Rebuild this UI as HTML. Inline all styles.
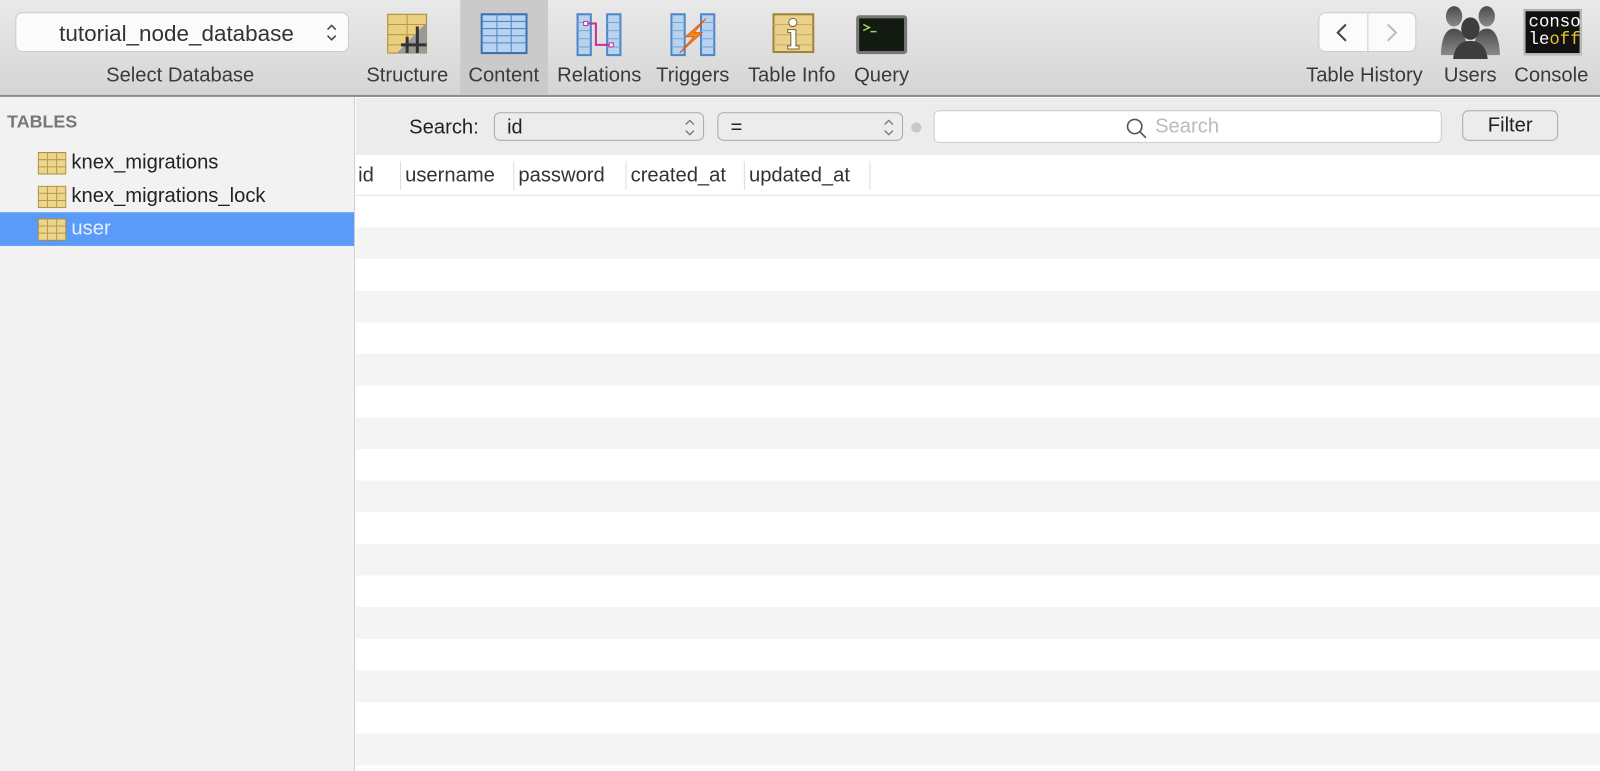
<!DOCTYPE html>
<html><head><meta charset="utf-8"><style>
*{box-sizing:border-box;margin:0;padding:0}
html,body{width:1600px;height:771px;overflow:hidden}
body{font-family:"Liberation Sans",sans-serif;background:#fff;position:relative;color:#333}
#w{position:absolute;left:0;top:0;width:1568px;height:756px;transform:scale(1.0204);transform-origin:0 0}
.tb{position:absolute;left:0;top:0;width:1568px;height:95px;background:linear-gradient(#e9e9e9,#d5d5d5);border-bottom:2px solid #8a8a8a}
.lbl{position:absolute;top:63px;font-size:19.8px;color:#3a3a3a;white-space:nowrap}
.ic{position:absolute;top:12px}
.sel{position:absolute;left:15px;top:12px;width:327px;height:39px;background:#fbfbfb;border:1px solid #ccc;border-radius:7px;font-size:22px;color:#333;padding:7px 0 0 42px}
.side{position:absolute;left:0;top:95px;width:348px;height:676px;background:#f3f2f2;border-right:1px solid #cfcfcf}
.side .h{position:absolute;left:7px;top:14px;font-size:17.5px;font-weight:bold;color:#777}
.it{position:absolute;left:0;width:347px;height:33px;font-size:19.8px;color:#222;padding:5px 0 0 70px}
.it svg{position:absolute;left:37px;top:6px}
.fb{position:absolute;left:349px;top:96px;width:1251px;height:56px;background:#ececec}
.pop{position:absolute;top:14px;height:28px;border:1px solid #aaa;border-radius:6px;background:#ececec;font-size:19.5px;color:#222;padding:3px 0 0 12px}
.pop svg{position:absolute;right:8px;top:5px}
.hd{position:absolute;left:349px;top:152px;width:1251px;height:40px;background:#fff;border-bottom:1px solid #e4e4e4}
.hd span{position:absolute;top:9px;font-size:19.8px;color:#333;height:28px}
.sep{position:absolute;top:6px;width:1px;height:28px;background:#ddd}
.rows{position:absolute;left:349px;top:192px;width:1251px;height:579px;background:repeating-linear-gradient(#fff 0 31px,#f4f4f4 31px 62px)}
</style></head><body><div id="w">
<div class="tb">
 <div class="sel">tutorial_node_database<svg style="position:absolute;right:10px;top:9px" width="12" height="20"><path d="M2 7L6 3L10 7M2 13L6 17L10 13" stroke="#444" stroke-width="1.5" fill="none"/></svg></div>
 <div class="lbl" style="left:104px">Select Database</div>
 <div style="position:absolute;left:451px;top:0;width:86px;height:93px;background:#cacaca"></div>
 <svg class="ic" style="left:379px" width="42" height="42"><rect x="1" y="2" width="38" height="38" fill="#e9cf7f" stroke="#a8892f"/><path d="M1 12H39M1 22H39M1 32H39M20 2V40" stroke="#b8993e"/><path d="M39 10L10 40H39Z" fill="#9a9a9a"/><path d="M20 40V24M30 40V14M14 32H39" stroke="#333" stroke-width="3"/></svg>
 <svg class="ic" style="left:471px" width="46" height="42"><rect x="1" y="2" width="44" height="38" fill="#b8d3f0" stroke="#3b6fb0" stroke-width="2"/><path d="M1 9H45M1 16H45M1 23H45M1 30H45M16 2V40M30 2V40" stroke="#4f86c6"/></svg>
 <div class="lbl" style="left:359px">Structure</div><div class="lbl" style="left:459px">Content</div>
 <svg class="ic" style="left:564px" width="46" height="44"><rect x="2" y="2" width="13" height="40" fill="#b8d3f0" stroke="#4f86c6" stroke-width="2"/><rect x="31" y="2" width="13" height="40" fill="#b8d3f0" stroke="#4f86c6" stroke-width="2"/><path d="M2 10H15M2 18H15M2 26H15M2 34H15M31 10H44M31 18H44M31 26H44M31 34H44" stroke="#7aa4d6"/><path d="M10 11H20V32H35" stroke="#c2329a" stroke-width="2" fill="none"/><rect x="8" y="9" width="4" height="4" fill="#fff" stroke="#c2329a"/><rect x="33" y="30" width="4" height="4" fill="#fff" stroke="#c2329a"/></svg>
 <div class="lbl" style="left:546px">Relations</div>
 <svg class="ic" style="left:656px" width="46" height="44"><rect x="2" y="2" width="13" height="40" fill="#b8d3f0" stroke="#4f86c6" stroke-width="2"/><rect x="31" y="2" width="13" height="40" fill="#b8d3f0" stroke="#4f86c6" stroke-width="2"/><path d="M2 10H15M2 18H15M2 26H15M2 34H15M31 10H44M31 18H44M31 26H44M31 34H44" stroke="#7aa4d6"/><path d="M36 6L16 24H24L10 40L32 20H24Z" fill="#f08a1c" stroke="#e0601a" stroke-width="1"/></svg>
 <div class="lbl" style="left:643px">Triggers</div>
 <svg class="ic" style="left:757px" width="42" height="42"><rect x="1" y="2" width="39" height="37" fill="#ead08a" stroke="#9d8438" stroke-width="2"/><path d="M1 12H40M1 22H40M1 32H40" stroke="#c6ad60"/><circle cx="20" cy="10" r="4" fill="#fff" stroke="#7a6428"/><path d="M15 17H23V33H26V36H15V33H18V20H15Z" fill="#fff" stroke="#7a6428"/></svg>
 <div class="lbl" style="left:733px">Table Info</div>
 <svg class="ic" style="left:838px;top:14px" width="52" height="40"><rect x="1" y="1" width="50" height="38" rx="3" fill="#777"/><rect x="4" y="4" width="44" height="32" fill="#121a12"/><path d="M8 10L14 13L8 16M15 17H21" stroke="#9ccf5c" stroke-width="1.5" fill="none"/></svg>
 <div class="lbl" style="left:837px">Query</div>
 <div style="position:absolute;left:1292px;top:12px;width:96px;height:39px;background:#fbfbfb;border:1px solid #ccc;border-radius:7px"><div style="position:absolute;left:47px;top:0;width:1px;height:37px;background:#ccc"></div>
 <svg style="position:absolute;left:15px;top:9px" width="16" height="20"><path d="M11 2L3 10L11 18" stroke="#444" stroke-width="2" fill="none"/></svg>
 <svg style="position:absolute;left:63px;top:9px" width="16" height="20"><path d="M4 2L12 10L4 18" stroke="#bbb" stroke-width="2" fill="none"/></svg></div>
 <div class="lbl" style="left:1280px">Table History</div>
 <svg class="ic" style="left:1412px;top:4px" width="58" height="54"><defs><linearGradient id="g" x1="0" y1="0" x2="0" y2="1"><stop offset="0" stop-color="#4a4a4a"/><stop offset="1" stop-color="#8a8a8a"/></linearGradient></defs><g fill="url(#g)"><ellipse cx="13" cy="12" rx="8" ry="10"/><path d="M0 50Q1 24 13 24Q25 24 27 50Z"/><ellipse cx="45" cy="12" rx="8" ry="10"/><path d="M31 50Q33 24 45 24Q57 24 58 50Z"/></g><g fill="#3d3d3d"><ellipse cx="29" cy="24" rx="9" ry="11"/><path d="M12 54Q14 36 29 36Q44 36 46 54Z"/></g></svg>
 <div class="lbl" style="left:1415px">Users</div>
 <div style="position:absolute;left:1493px;top:9px;width:57px;height:45px;background:#111;border:2px solid #bbb;font-family:'Liberation Mono',monospace;font-size:17px;line-height:17px;color:#fff;padding:3px 0 0 3px">conso<br>le<span style="color:#e9c22a">off</span></div>
 <div class="lbl" style="left:1484px">Console</div>
</div>
<div class="side"><div class="h">TABLES</div>
 <div class="it" style="top:48px"><svg width="28" height="22"><rect x="0.5" y="0.5" width="27" height="21" fill="#ecd58e" stroke="#a98b35"/><path d="M0 7.5H28M0 14.5H28M9.5 0V22M18.5 0V22" stroke="#b99a44"/></svg>knex_migrations</div>
 <div class="it" style="top:81px"><svg width="28" height="22"><rect x="0.5" y="0.5" width="27" height="21" fill="#ecd58e" stroke="#a98b35"/><path d="M0 7.5H28M0 14.5H28M9.5 0V22M18.5 0V22" stroke="#b99a44"/></svg>knex_migrations_lock</div>
 <div class="it" style="top:113px;background:#5a9af8;color:#e8f0ff"><svg width="28" height="22"><rect x="0.5" y="0.5" width="27" height="21" fill="#ecd58e" stroke="#a98b35"/><path d="M0 7.5H28M0 14.5H28M9.5 0V22M18.5 0V22" stroke="#b99a44"/></svg>user</div>
</div>
<div class="fb">
 <div style="position:absolute;left:52px;top:18px;font-size:19.8px;color:#222">Search:</div>
 <div class="pop" style="left:135px;width:206px">id<svg width="10" height="18"><path d="M1 6L5 2L9 6M1 12L5 16L9 12" stroke="#777" stroke-width="1.3" fill="none"/></svg></div>
 <div class="pop" style="left:354px;width:182px">=<svg width="10" height="18"><path d="M1 6L5 2L9 6M1 12L5 16L9 12" stroke="#777" stroke-width="1.3" fill="none"/></svg></div>
 <div style="position:absolute;left:544px;top:24px;width:10px;height:10px;border-radius:50%;background:#c8c8c8"></div>
 <div style="position:absolute;left:566px;top:12px;width:498px;height:32px;background:#fff;border:1px solid #ccc;border-radius:5px">
  <svg style="position:absolute;left:187px;top:6px" width="22" height="22"><circle cx="9" cy="9" r="7" stroke="#555" stroke-width="1.6" fill="none"/><path d="M14 14L20 20" stroke="#555" stroke-width="1.6"/></svg>
  <span style="position:absolute;left:216px;top:4px;font-size:19.8px;color:#bbb">Search</span></div>
 <div style="position:absolute;left:1084px;top:12px;width:94px;height:30px;border:1px solid #aaa;border-radius:6px;background:#ececec;font-size:19.8px;color:#222;text-align:center;padding-top:3px">Filter</div>
</div>
<div class="hd">
 <span style="left:2px">id</span><div class="sep" style="left:43px"></div>
 <span style="left:48px">username</span><div class="sep" style="left:154px"></div>
 <span style="left:159px">password</span><div class="sep" style="left:264px"></div>
 <span style="left:269px">created_at</span><div class="sep" style="left:380px"></div>
 <span style="left:385px">updated_at</span><div class="sep" style="left:503px"></div>
</div>
<div class="rows"></div>
</div></body></html>
